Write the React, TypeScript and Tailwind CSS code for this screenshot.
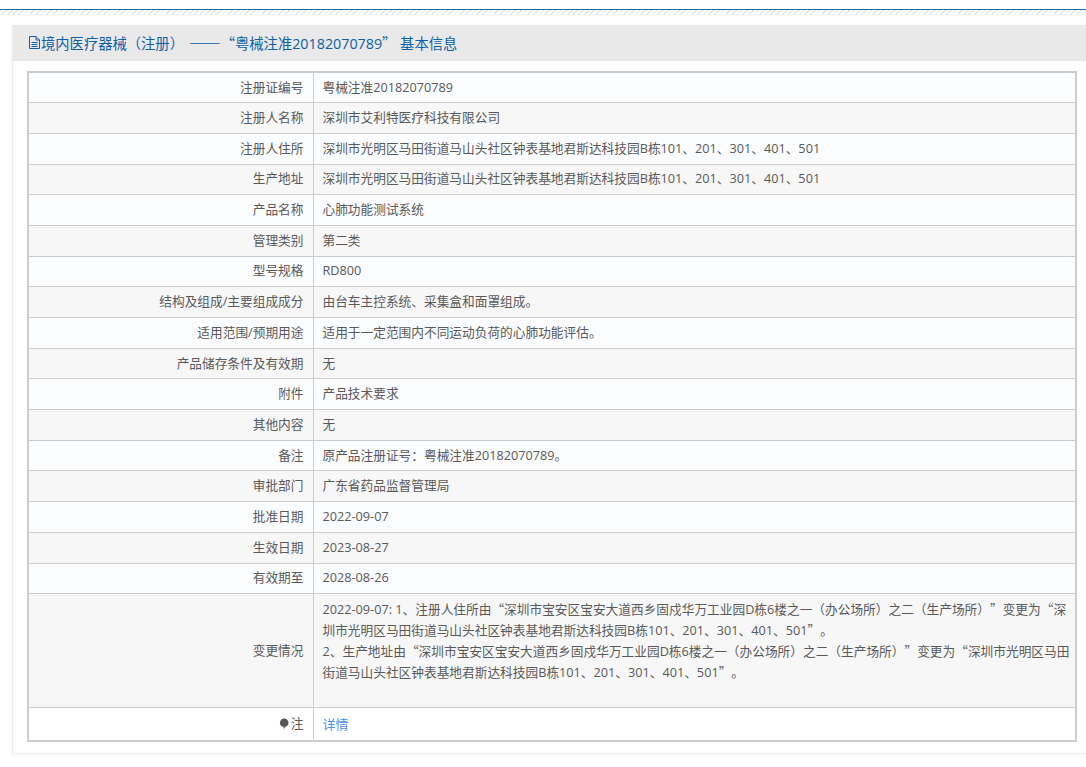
const rows: [string, string][] = [
  ["注册证编号", "粤械注准20182070789"],
  ["注册人名称", "深圳市艾利特医疗科技有限公司"],
  ["注册人住所", "深圳市光明区马田街道马山头社区钟表基地君斯达科技园B栋101、201、301、401、501"],
  ["生产地址", "深圳市光明区马田街道马山头社区钟表基地君斯达科技园B栋101、201、301、401、501"],
  ["产品名称", "心肺功能测试系统"],
  ["管理类别", "第二类"],
  ["型号规格", "RD800"],
  ["结构及组成/主要组成成分", "由台车主控系统、采集盒和面罩组成。"],
  ["适用范围/预期用途", "适用于一定范围内不同运动负荷的心肺功能评估。"],
  ["产品储存条件及有效期", "无"],
  ["附件", "产品技术要求"],
  ["其他内容", "无"],
  ["备注", "原产品注册证号：粤械注准20182070789。"],
  ["审批部门", "广东省药品监督管理局"],
  ["批准日期", "2022-09-07"],
  ["生效日期", "2023-08-27"],
  ["有效期至", "2028-08-26"],
];

const th = "border border-[#cdcdcd] text-right font-normal pl-2 pr-[9px] w-[285px] py-0 align-middle";
const td = "border border-[#cdcdcd] text-left pl-[9px] pr-0 py-0 align-middle";

function Q({ c }: { c: string }) {
  return <span className="font-['Noto_Sans_CJK_SC'] leading-none">{c}</span>;
}

export default function App() {
  return (
    <div lang="zh-CN" className="min-h-[767px] bg-white text-[12.7px] text-[#595959] overflow-hidden [text-spacing-trim:space-all]" style={{ fontFamily: '"Open Sans", "Noto Sans CJK SC", sans-serif' }}>
      <div className="h-[10px] border-b border-[#1c6a9e]" />
      <div className="h-[5px] bg-[repeating-linear-gradient(135deg,#e6e6e6_0,#e6e6e6_1.200px,#ffffff_1.200px,#ffffff_4px)]" />
      <div className="ml-[12px] mt-[10px] w-[1090px] border-x border-b border-[#ededed] shadow-[0_1px_4px_rgba(0,0,0,0.05)]">
        <div className="h-[36px] bg-[#e9e9e9] flex items-center pl-[15px] pb-[1px] text-[#0b61a4] text-[14.3px]">
          <svg width="13" height="15" viewBox="0 0 13 15" fill="none" stroke="#0b61a4" strokeWidth="1" className="shrink-0">
            <path d="M1.500 1.500h6.500l3.500 3.500v8.500h-10z" />
            <path d="M8 1.500v3.500h3.500M3.500 7.500h6M3.500 9.500h6M3.500 11.500h6" />
          </svg>
          <span className="whitespace-pre">境内医疗器械（注册） <span className="text-[16px] ml-[1px]"><Q c="——" /></span><Q c="“" />粤械注准20182070789<Q c="”" /> 基本信息</span>
        </div>
        <div className="pt-[10px] pb-[11px] pl-[14px]">
          <table className="w-[1050px] border-collapse border-2 border-[#cdcdcd] table-fixed">
            <tbody>
              {rows.map(([k, v], i) => (
                <tr key={k} className={`h-[30.7px] ${i % 2 === 0 ? "bg-[#fbfcfe]" : "bg-[#f7f7f7]"}`}>
                  <th className={`${th} pb-[1px]`}>{k}</th>
                  <td className={`${td} pb-[1px]`}>{v}</td>
                </tr>
              ))}
              <tr className="h-[114px] bg-[#f7f7f7]">
                <th className={th}>变更情况</th>
                <td className={`${td} align-top pt-[5px] leading-[20.800px]`}>
                  2022-09-07: 1、注册人住所由<Q c="“" />深圳市宝安区宝安大道西乡固戍华万工业园D栋6楼之一（办公场所）之二（生产场所）<Q c="”" />变更为<Q c="“" />深圳市光明区马田街道马山头社区钟表基地君斯达科技园B栋101、201、301、401、501<Q c="”" />。
                  <br />
                  2、生产地址由<Q c="“" />深圳市宝安区宝安大道西乡固戍华万工业园D栋6楼之一（办公场所）之二（生产场所）<Q c="”" />变更为<Q c="“" />深圳市光明区马田街道马山头社区钟表基地君斯达科技园B栋101、201、301、401、501<Q c="”" />。
                </td>
              </tr>
              <tr className="h-[33px] bg-white">
                <th className={`${th} pt-[1px]`}>
                  <span className="inline-flex items-center justify-end">
                    <svg width="11" height="12" viewBox="0 0 11 12" className="mr-[1px]">
                      <circle cx="5.200" cy="4.800" r="4.300" fill="#555" />
                      <path d="M3.500 8.500h3.500l-1 1.500h-1.500z" fill="#888" />
                      <path d="M4.500 11h1.500" stroke="#aaa" />
                    </svg>
                    注
                  </span>
                </th>
                <td className={`${td} pt-[1px]`}><a className="text-[#4a95e0] text-[13px]">详情</a></td>
              </tr>
            </tbody>
          </table>
        </div>
      </div>
    </div>
  );
}
